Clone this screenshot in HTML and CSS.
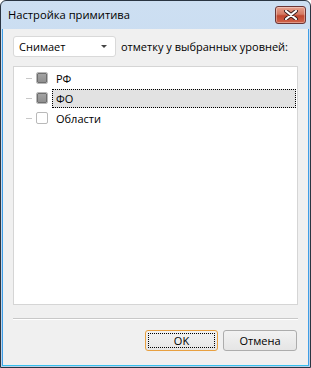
FILE: index.html
```html
<!DOCTYPE html>
<html lang="ru">
<head>
<meta charset="utf-8">
<title>Настройка примитива</title>
<link rel="stylesheet" href="styles.css">
</head>
<body>
<div class="window">
  <div class="titlebar">
    <span class="title">Настройка примитива</span>
    <span class="close">
      <svg width="16" height="10" viewBox="0 0 16 10">
        <path d="M3 1 L13 9 M13 1 L3 9" stroke="#3a1f1f" stroke-width="4" stroke-linecap="round"/>
        <path d="M3 1 L13 9 M13 1 L3 9" stroke="#ffffff" stroke-width="2.2" stroke-linecap="round"/>
      </svg>
    </span>
  </div>
  <div class="client">
    <div class="toprow">
      <div class="combo">
        <span>Снимает</span>
        <span class="arrow"></span>
      </div>
      <span class="label">отметку у выбранных уровней:</span>
    </div>
    <div class="tree">
      <div class="row">
        <span class="dash"></span>
        <span class="check partial"></span>
        <span class="text">РФ</span>
      </div>
      <div class="row">
        <span class="dash"></span>
        <span class="check partial"></span>
        <span class="text selected">ФО</span>
      </div>
      <div class="row">
        <span class="dash"></span>
        <span class="check"></span>
        <span class="text">Области</span>
      </div>
    </div>
    <div class="sep"></div>
    <div class="buttons">
      <button class="btn default"><span class="focus">OK</span></button>
      <button class="btn">Отмена</button>
    </div>
  </div>
</div>
</body>
</html>
```

FILE: styles.css
```css
* { box-sizing: border-box; }
html, body { margin: 0; padding: 0; background: #ffffff; }
body {
  font-family: "Open Sans", "Noto Sans", "Liberation Sans", sans-serif;
  font-size: 11px;
  color: #000;
}
.window {
  width: 311px;
  height: 368px;
  border: 1px solid #2a3542;
  border-radius: 6px 6px 0 0;
  background: linear-gradient(#cddff2, #b9d1ea);
  display: flex;
  flex-direction: column;
  overflow: hidden;
}
.titlebar {
  height: 28px;
  display: flex;
  align-items: center;
  justify-content: space-between;
  padding: 0 4px 2px 7px;
}
.title {
  font-size: 11.2px;
  color: #000;
}
.close {
  width: 31px;
  height: 18px;
  margin-top: 1px;
  border: 1px solid #6b3535;
  border-radius: 3px;
  background: linear-gradient(#e6a08d 0%, #d47a64 45%, #c0462f 55%, #d0644b 100%);
  display: flex;
  align-items: center;
  justify-content: center;
  box-shadow: inset 0 0 0 1px rgba(255,255,255,0.35);
}
.client {
  flex: 1;
  margin: 0 1px 1px 1px;
  border: 1px solid #3f9ee6;
  border-top: none;
  border-bottom-color: #35c0ee;
  background: #f0f0f0;
  padding: 7px 10px 0 10px;
  display: flex;
  flex-direction: column;
}
.toprow {
  display: flex;
  align-items: center;
  gap: 5px;
  height: 21px;
}
.combo {
  width: 103px;
  height: 21px;
  border: 1px solid #d9d9d9;
  border-radius: 3px;
  background: #ffffff;
  display: flex;
  align-items: center;
  justify-content: space-between;
  padding: 0 8px 0 5px;
}
.arrow {
  width: 0;
  height: 0;
  border-left: 3px solid transparent;
  border-right: 3px solid transparent;
  border-top: 3px solid #444;
}
.label { color: #000; }
.tree {
  margin-top: 9px;
  height: 239px;
  border: 1px solid #d5d5d5;
  background: #ffffff;
  padding-top: 1px;
}
.row {
  height: 20px;
  display: flex;
  align-items: center;
}
.dash {
  width: 6px;
  height: 1px;
  background: #c8c8c8;
  margin-left: 12px;
}
.check {
  width: 12px;
  height: 12px;
  margin-left: 4px;
  border: 1px solid #b9b9b9;
  border-radius: 2px;
  background: #fff;
  display: flex;
  align-items: center;
  justify-content: center;
}
.check.partial::after {
  content: "";
  width: 8px;
  height: 8px;
  border: 1px solid #6f6f6f;
  border-radius: 1px;
  background: linear-gradient(#a3a3a3, #8f8f8f);
}
.text {
  margin-left: 4px;
  padding: 0 3px;
  height: 19px;
  line-height: 17px;
  border: 1px dotted transparent;
}
.text.selected {
  flex: 1;
  background: #e2e2e2;
  border: 1px dotted #000;
  margin-right: 1px;
}
.sep {
  margin-top: 13px;
  height: 2px;
  border-top: 1px solid #c8c8c8;
  border-bottom: 1px solid #fff;
}
.buttons {
  margin-top: 10px;
  display: flex;
  justify-content: flex-end;
  gap: 5px;
  padding-right: 1px;
}
.btn {
  font: inherit;
  color: #000;
  width: 74px;
  height: 21px;
  border: 1px solid #acacac;
  border-radius: 3px;
  background: linear-gradient(#f2f2f2, #e5e5e5);
  padding: 0;
  display: flex;
  align-items: center;
  justify-content: center;
}
.btn.default {
  width: 73px;
  border-color: #e8a040;
  padding: 2px;
}
.btn.default .focus {
  flex: 1;
  align-self: stretch;
  border: 1px dotted #000;
  display: flex;
  align-items: center;
  justify-content: center;
}
```
